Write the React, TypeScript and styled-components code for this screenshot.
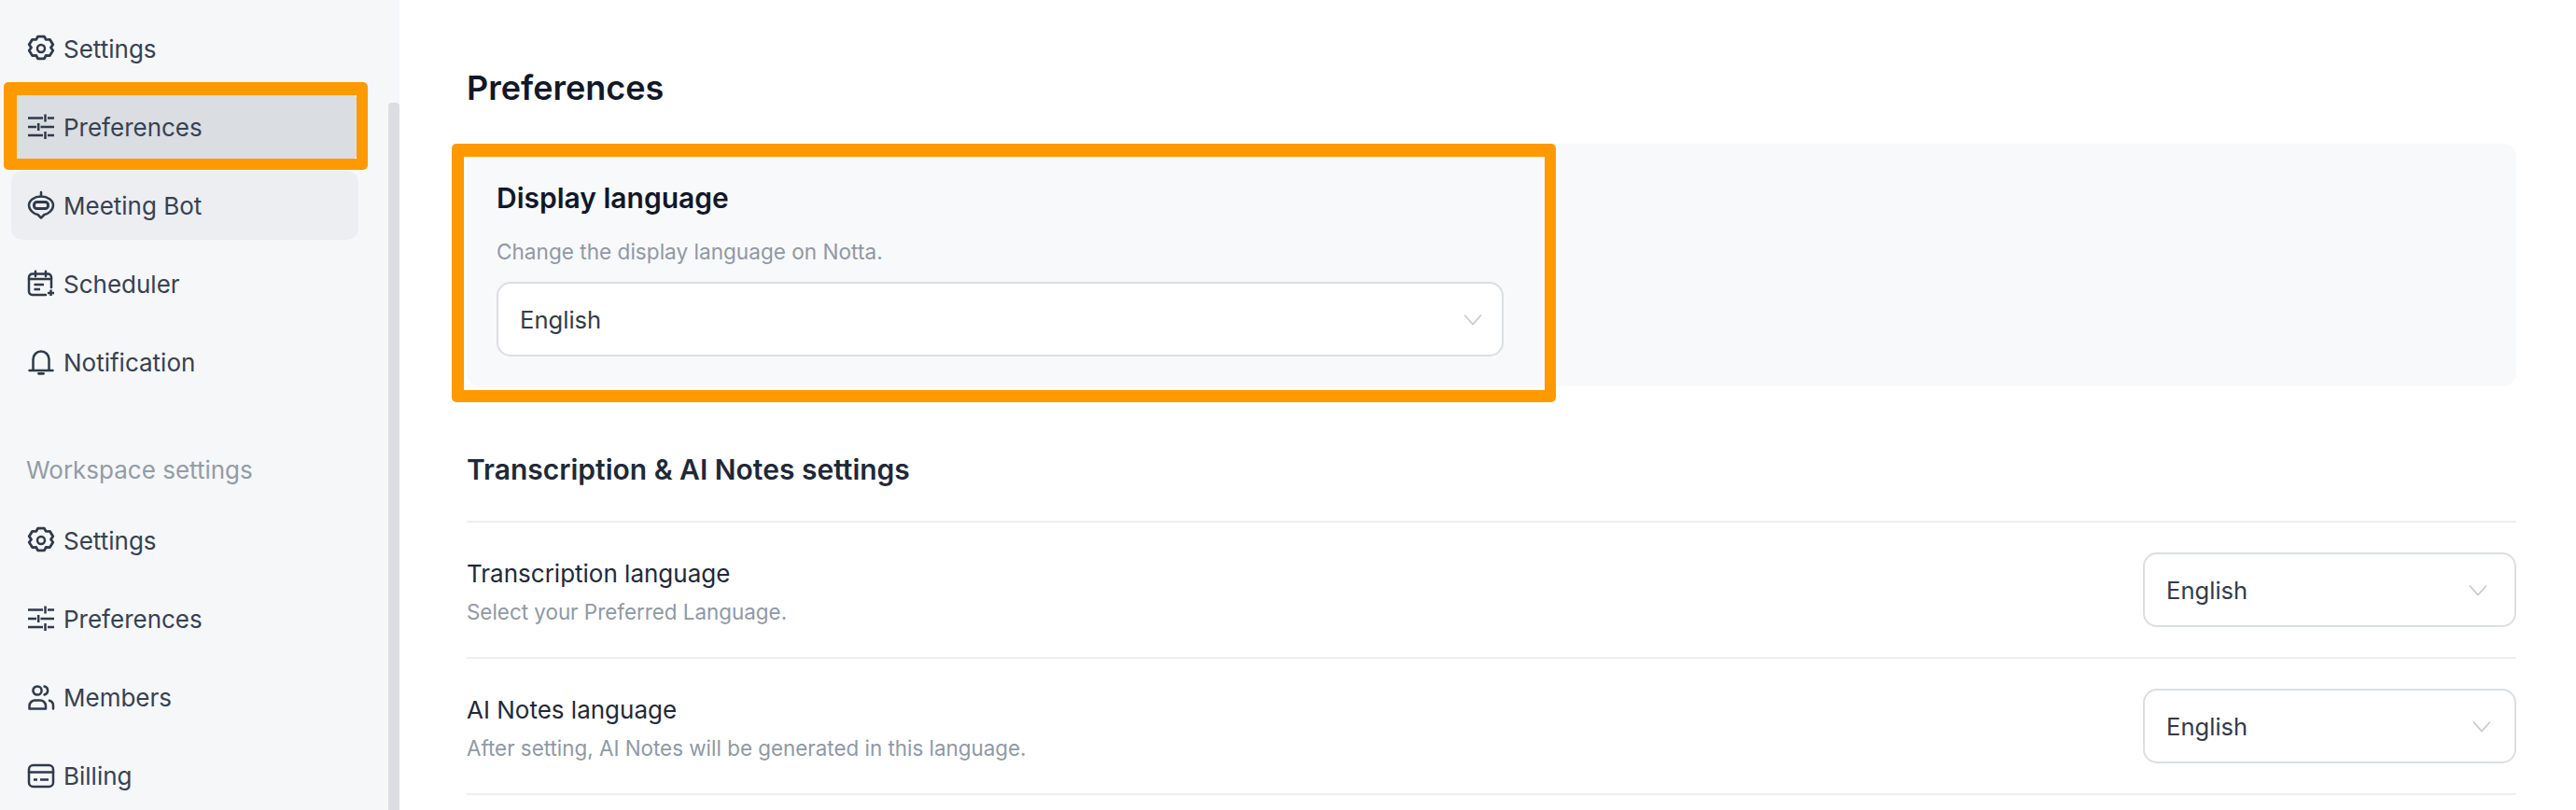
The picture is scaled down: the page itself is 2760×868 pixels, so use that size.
import React, {FC, ReactNode} from 'react';
import styled, {createGlobalStyle} from 'styled-components';

const GlobalStyle = createGlobalStyle`
  html, body {
    margin: 0;
    padding: 0;
    background: #fff;
  }
  body {
    font-family: Inter, "Noto Sans", sans-serif;
  }
`;

const Icon: FC<{children: ReactNode}> = ({children}) => (
  <IconSvg viewBox="0 0 28 28" fill="none" stroke="#2f3a4a" strokeWidth="2.5" strokeLinecap="round" strokeLinejoin="round">
    {children}
  </IconSvg>
);

const GearIcon = () => (
  <Icon>
    <path
      d="M11 1.8h6l1.6 3.2 3.6-.2 3 5.2-2 3 2 3-3 5.2-3.6-.2-1.6 3.2h-6l-1.6-3.2-3.6.2-3-5.2 2-3-2-3 3-5.2 3.6.2z"
      transform="translate(14 14) scale(1.14 1.06) translate(-14 -14)"
    />
    <circle cx="14" cy="14" r="4" />
  </Icon>
);

const SlidersIcon = () => (
  <Icon>
    <g strokeLinecap="butt">
      <path d="M0 4.500H16M21 4.500H28M18.500 .5V8.500" />
      <path d="M0 14H9M13.500 14H28M11.200 10V18" />
      <path d="M0 23H16M21 23H28M18.500 19V27" />
    </g>
  </Icon>
);

const BotIcon = () => (
  <Icon>
    <path d="M14 0V4" />
    <path d="M14 4.500C21 4.500 27 8.500 27 14C27 19.500 21 23.500 17.500 24L14 27.500L10.500 24C7 23.500 1 19.500 1 14C1 8.500 7 4.500 14 4.500Z" />
    <rect x="6.500" y="10.500" width="15" height="7" rx="3" strokeWidth="3" />
  </Icon>
);

const CalendarIcon = () => (
  <Icon>
    <path d="M25 18V7a3.500 3.500 0 0 0-3.500-3.500h-17A3.500 3.500 0 0 0 1 7v15.500A3.500 3.500 0 0 0 4.500 26H19" />
    <path d="M8 .8V6M19 .8V6M1 9H25" />
    <path d="M6.500 15H17M6.500 20H13" strokeWidth="2.600" strokeLinecap="butt" />
    <path d="M24.500 20.500V27M21 24H28" strokeLinecap="butt" />
  </Icon>
);

const BellIcon = () => (
  <Icon>
    <path d="M5.500 22.500V11a8.500 8.500 0 0 1 17 0V22.500" />
    <path d="M1.500 23H26.500" />
    <path d="M11.500 26.300H16.500" strokeWidth="2.800" />
  </Icon>
);

const MembersIcon = () => (
  <Icon>
    <circle cx="10" cy="7" r="4.600" />
    <path d="M17.500 2.500a4.600 4.600 0 0 1 0 9" />
    <path d="M1.500 26.500V23.500a6 6 0 0 1 6-6h5.500a6 6 0 0 1 6 6V26.500Z" />
    <path d="M23 17.800a5.500 5.500 0 0 1 4 5.200V26.500" />
  </Icon>
);

const BillingIcon = () => (
  <Icon>
    <rect x="1" y="3" width="26" height="23" rx="4.500" />
    <path d="M1 10.500H27" />
    <path d="M6 18.500H10M13 18.500H22" strokeWidth="2.400" strokeLinecap="butt" />
  </Icon>
);

const Chevron = () => (
  <ChevronSvg viewBox="0 0 20 13" fill="none" stroke="#c6c8cc" strokeWidth="1.600">
    <path d="M1 1.500L10 11.500L19 1.500" />
  </ChevronSvg>
);

const App: FC = () => (
  <Page>
    <GlobalStyle />
    <Sidebar>
      <Nav>
        <NavRow><GearIcon />Settings</NavRow>
        <NavRow $bg="#dadde2">
          <SlidersIcon />Preferences
          <NavMark />
        </NavRow>
        <NavRow $bg="#eceef2"><BotIcon />Meeting Bot</NavRow>
        <NavRow><CalendarIcon />Scheduler</NavRow>
        <NavRow><BellIcon />Notification</NavRow>
        <NavLabel>Workspace settings</NavLabel>
        <NavRow><GearIcon />Settings</NavRow>
        <NavRow><SlidersIcon />Preferences</NavRow>
        <NavRow><MembersIcon />Members</NavRow>
        <NavRow><BillingIcon />Billing</NavRow>
      </Nav>
      <ScrollThumb />
    </Sidebar>
    <Main>
      <Title>Preferences</Title>
      <Panel>
        <PanelTitle>Display language</PanelTitle>
        <PanelHint>Change the display language on Notta.</PanelHint>
        <Select $width={1079} $chevronGap={21}>
          English
          <Chevron />
        </Select>
        <PanelMark />
      </Panel>
      <SectionHead>Transcription &amp; AI Notes settings</SectionHead>
      <SettingRow>
        <SettingText>
          <SettingName>Transcription language</SettingName>
          <SettingHint>Select your Preferred Language.</SettingHint>
        </SettingText>
        <Select $width={400} $chevronGap={29}>
          English
          <Chevron />
        </Select>
      </SettingRow>
      <SettingRow>
        <SettingText>
          <SettingName>AI Notes language</SettingName>
          <SettingHint>After setting, AI Notes will be generated in this language.</SettingHint>
        </SettingText>
        <Select $width={400} $chevronGap={25}>
          English
          <Chevron />
        </Select>
      </SettingRow>
    </Main>
  </Page>
);

const Page = styled.div`
  display: flex;
  width: 2760px;
  height: 868px;
  overflow: hidden;
  background: #fff;
`;

const Sidebar = styled.aside`
  display: flex;
  justify-content: space-between;
  flex: 0 0 428px;
  box-sizing: border-box;
  padding: 15px 0 0 12px;
  background: #f5f7f9;
`;

const Nav = styled.nav`
  display: flex;
  flex-direction: column;
  gap: 10px;
  width: 372px;
`;

const NavRow = styled.div<{$bg?: string}>`
  position: relative;
  display: flex;
  align-items: center;
  gap: 10px;
  flex: 0 0 74px;
  box-sizing: border-box;
  padding-left: 18px;
  border-radius: 12px;
  background: ${({$bg}) => $bg || 'transparent'};
  color: #374151;
  font-size: 26px;
`;

const NavMark = styled.div`
  position: absolute;
  left: -8px;
  top: -11px;
  width: 390px;
  height: 94px;
  box-sizing: border-box;
  border: solid #ff9900;
  border-width: 14px 12px 12px 14px;
  border-radius: 5px;
`;

const NavLabel = styled.div`
  display: flex;
  align-items: center;
  height: 40px;
  margin: 49px 0 10px;
  padding-left: 16px;
  color: #949ba6;
  font-size: 26px;
`;

const ScrollThumb = styled.div`
  width: 12px;
  margin-top: 95px;
  border-radius: 4px 4px 0 0;
  background: #dcdde0;
`;

const IconSvg = styled.svg`
  flex: 0 0 28px;
  width: 28px;
  height: 28px;
  overflow: visible;
`;

const Main = styled.main`
  flex: 1;
  box-sizing: border-box;
  padding: 74px 64px 0 72px;
`;

const Title = styled.h1`
  height: 40px;
  margin: 0 0 40px;
  color: #111827;
  font-size: 36px;
  font-weight: 600;
  line-height: 40px;
`;

const Panel = styled.section`
  position: relative;
  height: 260px;
  box-sizing: border-box;
  padding: 38px 32px 0;
  border-radius: 14px;
  background: #f8f9fb;
`;

const PanelMark = styled.div`
  position: absolute;
  left: -16px;
  top: 0;
  width: 1183px;
  height: 277px;
  box-sizing: border-box;
  border: solid #ff9900;
  border-width: 14px 12px 13px 13px;
  border-radius: 5px;
`;

const PanelTitle = styled.h2`
  height: 40px;
  margin: 0;
  color: #111827;
  font-size: 30px;
  font-weight: 600;
  line-height: 40px;
`;

const PanelHint = styled.p`
  height: 36px;
  margin: 20px 0 14px;
  color: #9098a4;
  font-size: 22.6px;
  line-height: 36px;
`;

const Select = styled.div<{$width: number; $chevronGap: number}>`
  display: flex;
  align-items: center;
  justify-content: space-between;
  flex: none;
  width: ${({$width}) => $width}px;
  height: 80px;
  box-sizing: border-box;
  padding: 0 ${({$chevronGap}) => $chevronGap}px 0 23px;
  border: 2px solid #dcdee1;
  border-radius: 15px;
  background: #fff;
  color: #333b47;
  font-size: 25.6px;
`;

const ChevronSvg = styled.svg`
  width: 20px;
  height: 13px;
`;

const SectionHead = styled.h3`
  height: 40px;
  margin: 69px 0 0;
  padding-bottom: 35px;
  border-bottom: 2px solid #eeeff2;
  color: #1f2937;
  font-size: 30px;
  font-weight: 600;
  line-height: 40px;
`;

const SettingRow = styled.div`
  display: flex;
  align-items: center;
  justify-content: space-between;
  height: 146px;
  box-sizing: border-box;
  border-bottom: 2px solid #eeeff2;
`;

const SettingText = styled.div`
  display: flex;
  flex-direction: column;
  gap: 5px;
  padding-top: 7px;
`;

const SettingName = styled.div`
  color: #1f2937;
  font-size: 26px;
  line-height: 36px;
`;

const SettingHint = styled.div`
  color: #9098a4;
  font-size: 22.4px;
  line-height: 36px;
`;

export default App;
